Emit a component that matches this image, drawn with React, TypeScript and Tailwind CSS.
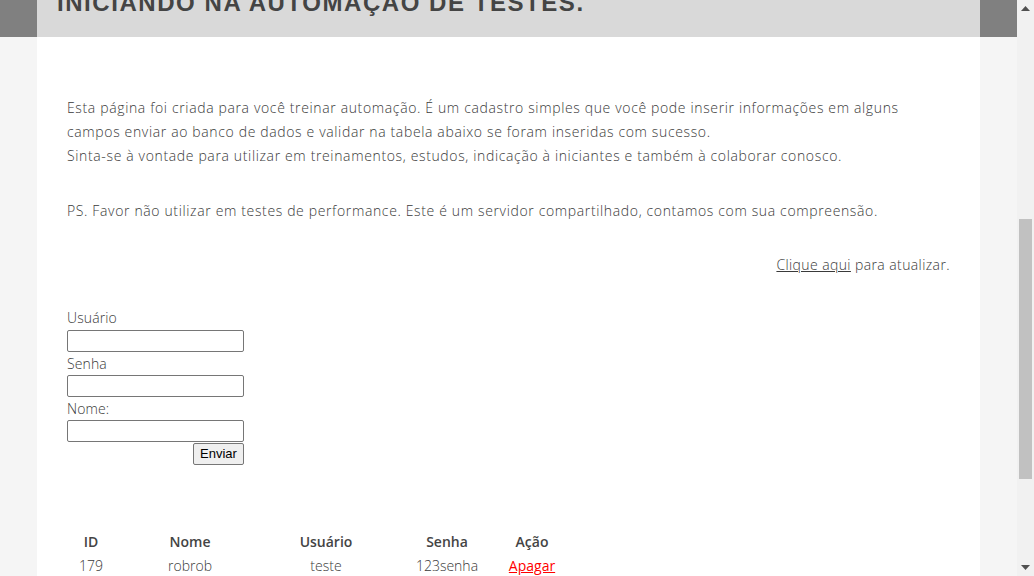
import React from "react";

const body = { fontFamily: "'Open Sans', Lato, sans-serif" };

export default function App() {
  return (
    <div className="w-[1034px] h-[576px] overflow-hidden flex bg-[#f5f5f5]" style={body}>
      <div className="flex-1 flex flex-col">
        <div className="flex-1 flex justify-center bg-[linear-gradient(#808080_0,#808080_37px,#f5f5f5_37px)]">
          <div className="w-[943px] bg-white flex flex-col">
            <div className="h-[37px] bg-[#d9d9d9] overflow-hidden px-[20px]">
              <h1
                className="text-[24px] leading-none font-bold text-[#444] tracking-[1.55px] mt-[-9px] whitespace-nowrap"
                style={{ fontFamily: "'Liberation Sans', Arial, sans-serif" }}
              >
                INICIANDO NA AUTOMAÇÃO DE TESTES.
              </h1>
            </div>
            <div className="px-[30px] pt-[59px] text-[14px] leading-[24px] font-light text-[#3a3a3a]">
              <p className="tracking-[0.64px]">
                Esta página foi criada para você treinar automação. É um cadastro simples que você pode inserir informações em alguns
                <br />
                campos enviar ao banco de dados e validar na tabela abaixo se foram inseridas com sucesso.
                <br />
                Sinta-se à vontade para utilizar em treinamentos, estudos, indicação à iniciantes e também à colaborar conosco.
              </p>
              <p className="mt-[31px] tracking-[0.64px]">
                PS. Favor não utilizar em testes de performance. Este é um servidor compartilhado, contamos com sua compreensão.
              </p>
              <p className="mt-[30px] text-right tracking-[0.4px]">
                <span className="underline">Clique aqui</span> para atualizar.
              </p>
              <form className="mt-[30px] w-[177px] flex flex-col tracking-[0.1px]">
                <label className="h-[23px] leading-[22px]">Usuário</label>
                <input className="h-[22px] border border-[#767676] rounded-[2px] bg-white" />
                <label className="h-[23px] leading-[24px]">Senha</label>
                <input className="h-[22px] border border-[#767676] rounded-[2px] bg-white" />
                <label className="h-[23px] leading-[24px]">Nome:</label>
                <input className="h-[22px] border border-[#767676] rounded-[2px] bg-white" />
                <div className="flex justify-end mt-[1px]">
                  <button
                    type="button"
                    className="h-[22px] w-[51px] border border-[#767676] rounded-[2px] bg-[#efefef] text-[13px] leading-[18px] text-black font-normal tracking-normal"
                    style={{ fontFamily: "'Liberation Sans', Arial, sans-serif" }}
                  >
                    Enviar
                  </button>
                </div>
              </form>
              <table className="mt-[65px] border-collapse text-center">
                <thead>
                  <tr className="h-[23px] text-[#444] text-[14px]">
                    <th className="w-[48px] p-0 font-semibold">ID</th>
                    <th className="w-[150px] p-0 font-semibold">Nome</th>
                    <th className="w-[122px] p-0 font-semibold">Usuário</th>
                    <th className="w-[120px] p-0 font-semibold">Senha</th>
                    <th className="w-[50px] p-0 font-semibold">Ação</th>
                  </tr>
                </thead>
                <tbody>
                  <tr className="h-[23px]">
                    <td className="p-0">179</td>
                    <td className="p-0">robrob</td>
                    <td className="p-0">teste</td>
                    <td className="p-0">123senha</td>
                    <td className="p-0">
                      <span className="text-[#ff0000] underline font-normal">Apagar</span>
                    </td>
                  </tr>
                </tbody>
              </table>
            </div>
          </div>
        </div>
      </div>
      <div className="w-[17px] h-[576px] bg-[#f1f1f1] flex flex-col items-center">
        <div className="h-[17px] flex items-center justify-center">
          <svg width="9" height="5" viewBox="0 0 9 5"><path d="M0 5 L4.5 0 L9 5 Z" fill="#505050" /></svg>
        </div>
        <div className="mt-[202px] w-[13px] h-[260px] bg-[#c1c1c1]" />
        <div className="flex-1" />
        <div className="h-[17px] flex items-center justify-center">
          <svg width="9" height="5" viewBox="0 0 9 5"><path d="M0 0 L9 0 L4.5 5 Z" fill="#505050" /></svg>
        </div>
      </div>
    </div>
  );
}
